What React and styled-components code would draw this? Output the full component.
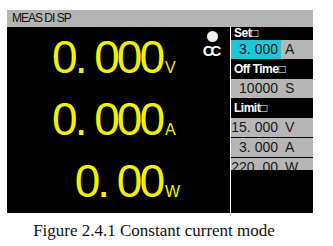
import React from 'react';
import styled, { createGlobalStyle } from 'styled-components';

const GlobalStyle = createGlobalStyle`
  body {
    margin: 0;
    background: #fff;
    font-family: "Liberation Sans", Arial, sans-serif;
  }
`;

const Page = styled.div`
  width: 333px;
  height: 246px;
  padding: 10px 0 0 7px;
  box-sizing: border-box;
`;

const Screen = styled.div`
  width: 306px;
  height: 203px;
  background: #000;
  display: flex;
  flex-direction: column;
`;

const TitleBar = styled.div`
  height: 17px;
  background: #b4b4b4;
  color: #111;
  font-size: 12px;
  letter-spacing: -1px;
  line-height: 17px;
  padding-left: 5px;
`;

const Body = styled.div`
  flex: 1;
  display: flex;
`;

const Main = styled.div`
  flex: 1;
  display: flex;
  border-right: 1px solid #fff;
`;

const Readings = styled.div`
  width: 173px;
  display: flex;
  flex-direction: column;
`;

const Reading = styled.div`
  height: 62px;
  display: flex;
  align-items: baseline;
  justify-content: flex-end;
  color: #f2f200;
  line-height: 60px;
`;

const Value = styled.span`
  font-size: 46px;
  letter-spacing: -3px;
`;

const Unit = styled.span`
  font-size: 16px;
  width: 15px;
  margin-left: 3px;
`;

const Mode = styled.div`
  margin-left: 22px;
  padding-top: 4px;
  display: flex;
  flex-direction: column;
  align-items: center;
  width: 20px;
  color: #fff;
`;

const Dot = styled.div`
  width: 11px;
  height: 11px;
  border-radius: 50%;
  background: #eee;
`;

const ModeText = styled.div`
  font-size: 15px;
  font-weight: bold;
  letter-spacing: -3px;
  line-height: 15px;
  margin-top: 1px;
  padding-right: 3px;
`;

const Panel = styled.div`
  width: 82px;
  display: flex;
  flex-direction: column;
`;

const List = styled.div`
  height: 143px;
  overflow: hidden;
  display: flex;
  flex-direction: column;
`;

const Label = styled.div`
  height: ${(p) => p.$h || 19}px;
  line-height: ${(p) => p.$h || 19}px;
  color: #fff;
  font-size: 12px;
  font-weight: bold;
  letter-spacing: -0.5px;
  padding-left: 3px;
  flex-shrink: 0;
`;

const Field = styled.div`
  height: 19px;
  flex-shrink: 0;
  display: grid;
  grid-template-columns: ${(p) => (p.$active ? '50px' : '47px')} 1fr;
  background: #b6b6b6;
  color: #1a1a1a;
  font-size: 14px;
  line-height: 19px;
  margin-bottom: 1px;
`;

const Num = styled.span`
  text-align: right;
  padding-right: ${(p) => (p.$active ? 3 : 0)}px;
  background: ${(p) => (p.$active ? '#1fc6da' : 'transparent')};
`;

const FieldUnit = styled.span`
  padding-left: ${(p) => (p.$active ? 4 : 7)}px;
`;

const Caption = styled.div`
  font-family: "Liberation Serif", "Times New Roman", serif;
  font-size: 17px;
  color: #111;
  width: 294px;
  text-align: center;
  margin-top: 8px;
  white-space: nowrap;
`;

const readings = [
  { value: '0. 000', unit: 'V' },
  { value: '0. 000', unit: 'A' },
  { value: '0. 00', unit: 'W' },
];

export default function App() {
  return (
    <>
      <GlobalStyle />
      <Page>
        <Screen>
          <TitleBar>MEAS DI SP</TitleBar>
          <Body>
            <Main>
              <Readings>
                {readings.map((r) => (
                  <Reading key={r.unit}>
                    <Value>{r.value}</Value>
                    <Unit>{r.unit}</Unit>
                  </Reading>
                ))}
              </Readings>
              <Mode>
                <Dot />
                <ModeText>CC</ModeText>
              </Mode>
            </Main>
            <Panel>
              <List>
                <Label $h={13}>Set□</Label>
                <Field $active>
                  <Num $active>3. 000</Num>
                  <FieldUnit $active>A</FieldUnit>
                </Field>
                <Label>Off Time□</Label>
                <Field>
                  <Num>10000</Num>
                  <FieldUnit>S</FieldUnit>
                </Field>
                <Label>Limit□</Label>
                <Field>
                  <Num>15. 000</Num>
                  <FieldUnit>V</FieldUnit>
                </Field>
                <Field>
                  <Num>3. 000</Num>
                  <FieldUnit>A</FieldUnit>
                </Field>
                <Field>
                  <Num>220. 00</Num>
                  <FieldUnit>W</FieldUnit>
                </Field>
              </List>
            </Panel>
          </Body>
        </Screen>
        <Caption>Figure 2.4.1 Constant current mode</Caption>
      </Page>
    </>
  );
}
